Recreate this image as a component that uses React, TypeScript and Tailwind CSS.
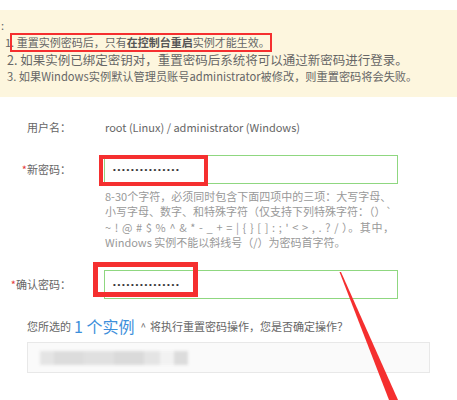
const cjk = { fontFamily: '"Noto Sans CJK SC", "Noto Sans", sans-serif' };

function Dots() {
  return (
    <span
      className="text-[8px] tracking-[1.7px] text-[#333]"
      style={{ fontFamily: '"Liberation Sans", Arial, sans-serif' }}
    >
      •••••••••••••••
    </span>
  );
}

function Label({ text, required }: { text: string; required?: boolean }) {
  return (
    <div className="w-[71px] shrink-0 text-right text-[11px] text-[#666]">
      {required ? <span className="text-[#e4393c]">*</span> : null}
      {text}：
    </div>
  );
}

export default function App() {
  return (
    <div className="relative h-[400px] w-[457px] overflow-hidden bg-white" style={cjk}>
      <div className="mt-[10px] h-[87px] bg-[#fdf6de] pl-[1px] pt-[7px] leading-[17px] whitespace-nowrap text-[#666]">
        <div className="text-[11px]">:</div>
        <div className="relative pl-[4px] text-[11px]">
          1. 重置实例密码后，只有<span className="font-semibold text-[#555]">在控制台重启</span>实例才能生效。
          <div className="absolute left-[9px] top-[-1px] h-[19px] w-[262px] border-2 border-[#f52f2f]" />
        </div>
        <div className="pl-[6px] text-[12.5px]">2. 如果实例已绑定密钥对，重置密码后系统将可以通过新密码进行登录。</div>
        <div className="pl-[6px] text-[11.2px]">3. 如果Windows实例默认管理员账号administrator被修改，则重置密码将会失败。</div>
      </div>

      <div className="mt-[20px] flex h-[20px] items-center">
        <Label text="用户名" />
        <div className="ml-[34px] text-[11px] text-[#666]">root (Linux) / administrator (Windows)</div>
      </div>

      <div className="mt-[18px] flex items-center">
        <Label text="新密码" required />
        <div className="relative ml-[33px] flex h-[29px] w-[294px] items-center border border-[#8fd780] pl-[8px]">
          <Dots />
          <div className="absolute left-[-6px] top-[-1px] h-[31px] w-[109px] border-4 border-[#f52f2f]" />
        </div>
      </div>

      <div className="ml-[105px] mt-[5px] w-[300px] whitespace-nowrap text-[11px] leading-[15.3px] text-[#999]">
        <div>8-30个字符，必须同时包含下面四项中的三项：大写字母、</div>
        <div>小写字母、数字、和特殊字符（仅支持下列特殊字符：（）`</div>
        <div className="tracking-[0.6px]">~ ! @ # $ % ^ &amp; * - _ + = | {"{ } [ ]"} : ; ' &lt; &gt; , . ? / ）。其中，</div>
        <div>Windows 实例不能以斜线号（/）为密码首字符。</div>
      </div>

      <div className="mt-[20px] flex items-center">
        <Label text="确认密码" required />
        <div className="relative ml-[33px] flex h-[29px] w-[294px] items-center border border-[#8fd780] pl-[8px]">
          <Dots />
          <div className="absolute left-[-12px] top-[-9px] h-[35px] w-[105px] border-[5px] border-[#f52f2f]" />
        </div>
      </div>

      <div className="ml-[27px] mt-[16px] flex h-[22px] items-center text-[11px] text-[#666]">
        <span>您所选的</span>
        <span className="ml-[3px] text-[16px] text-[#3d8fdb]">1 个实例</span>
        <span className="ml-[6px] text-[10px] text-[#666]">^</span>
        <span className="ml-[4px]">将执行重置密码操作，您是否确定操作？</span>
      </div>

      <div className="ml-[27px] mt-[5px] flex h-[31px] w-[403px] items-center border border-[#e8e8e8] bg-[#fafafa] pl-[12px]">
        <div className="flex h-[14px] blur-[1.5px]">
          <span className="w-[14px] bg-[#e4e4e4]" />
          <span className="w-[30px] bg-[#dcdcdc]" />
          <span className="w-[30px] bg-[#e0e0e0]" />
          <span className="w-[30px] bg-[#dadada]" />
          <span className="w-[16px] bg-[#e4e4e4]" />
          <span className="w-[14px] bg-[#f2f2f2]" />
          <span className="w-[14px] bg-[#dcdcdc]" />
        </div>
      </div>

      <svg className="pointer-events-none absolute left-0 top-0" width="457" height="400">
        <polygon points="339.5,272 341,272 398,400 389,400" fill="#f52f2f" />
      </svg>
    </div>
  );
}
